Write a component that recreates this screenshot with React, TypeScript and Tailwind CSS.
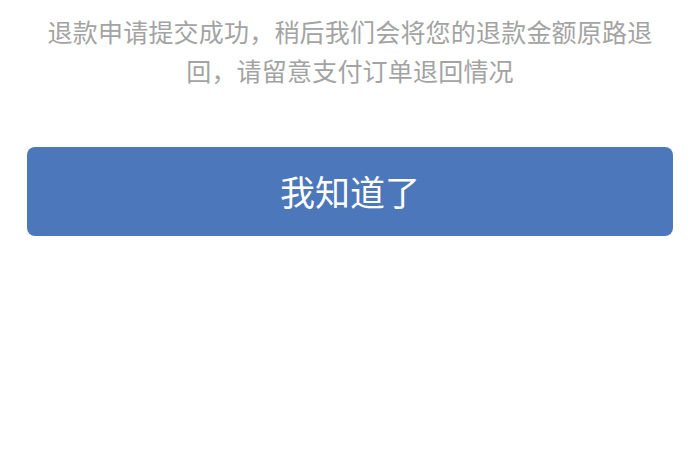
import React from 'react'

const RefundNotice: React.FC = () => {
    return (
        <div className="flex h-[470px] w-[700px] flex-col bg-white px-[27px] pt-[12px]" style={{ fontFamily: '"Noto Sans CJK SC", "Noto Sans", sans-serif' }}>
            <p className="mx-auto w-[620px] text-center text-[25px] leading-[39px] tracking-[0.2px] text-[#a3a3a3]">
                退款申请提交成功，稍后我们会将您的退款金额原路退回，请留意支付订单退回情况
            </p>

            <button className="mt-[57px] flex h-[89px] w-full items-center justify-center rounded-[8px] bg-[#4c77bb] text-[35px] text-white">
                我知道了
            </button>
        </div>
    )
}

export default function App() {
    return <RefundNotice />
}
